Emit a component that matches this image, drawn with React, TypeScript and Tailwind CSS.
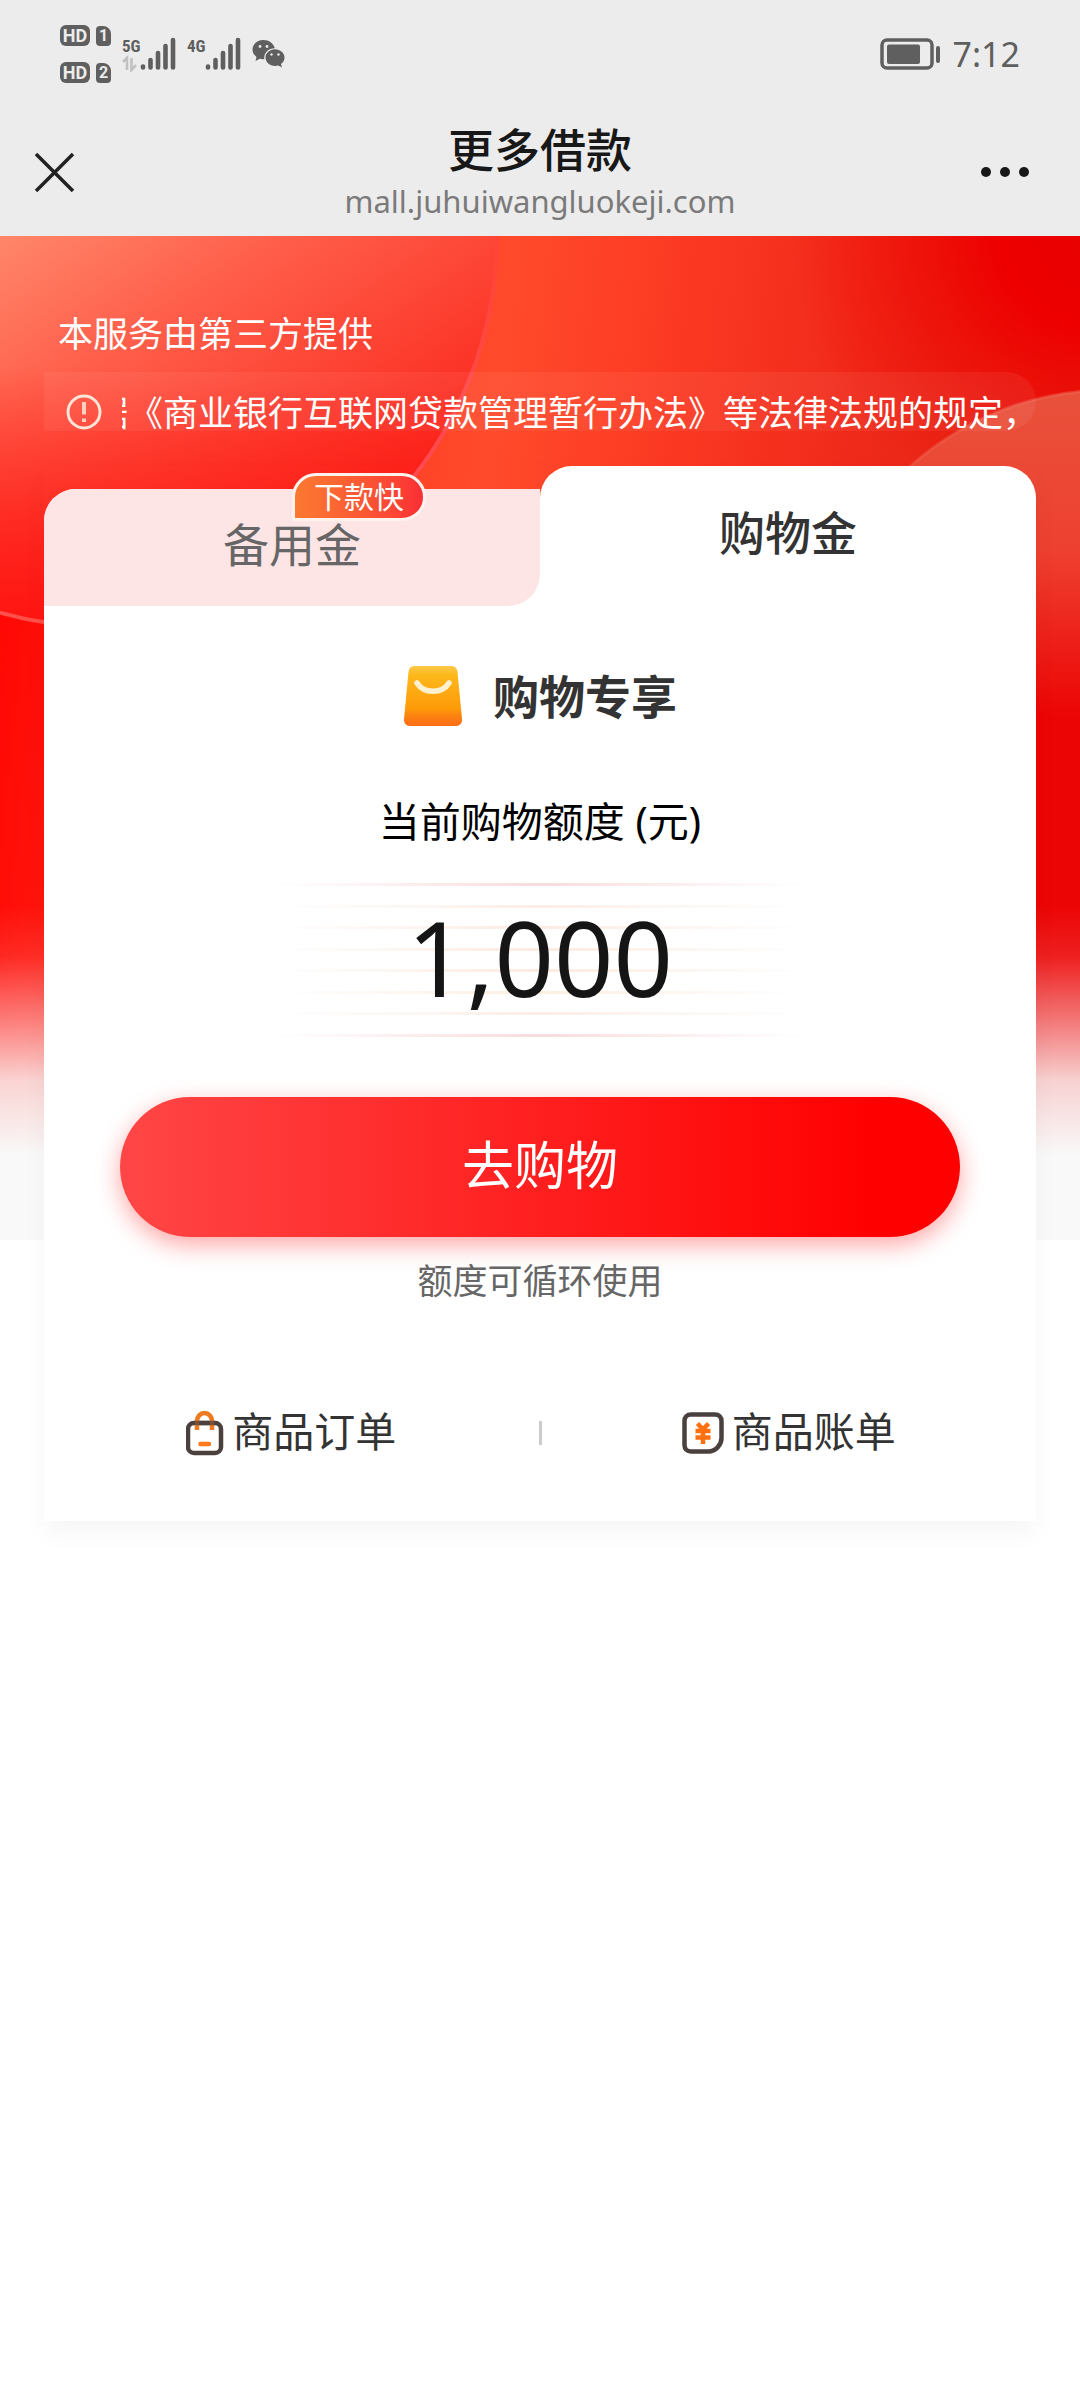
import React from "react";

const CREDIT_LINES = [
  "via-[#f8dcdf]",
  "via-[#fbeee6]",
  "via-[#fcebe2]",
  "via-[#fcebdf]",
  "via-[#fcebdf]",
  "via-[#fcefe0]",
  "via-[#fbeee6]",
  "via-[#f8dcdf]",
];

function SimBadge({ n }: { n: string }) {
  return (
    <div className="flex items-center gap-1.5 font-['Roboto',sans-serif] font-bold leading-none text-[#ececec]">
      <span className="flex h-[21px] w-[30px] items-center justify-center rounded-md bg-[#5f5f5f] text-[18px]">HD</span>
      <span className="flex h-[20px] w-[15px] items-center justify-center rounded-sm rounded-tr-lg bg-[#5f5f5f] text-[16px]">{n}</span>
    </div>
  );
}

function Signal({ label, arrows }: { label: string; arrows?: boolean }) {
  return (
    <svg width="54" height="36" viewBox="0 0 54 36" aria-label={label} role="img">
      <text x="0" y="16" fontFamily="Roboto Condensed, Roboto, sans-serif" fontSize="17" fontWeight="700" fill="#5f5f5f">
        {label}
      </text>
      {arrows && (
        <g stroke="#c0c0c0" strokeWidth="2.6" fill="none">
          <path d="M1 26 L5 22 V34" />
          <path d="M9.500 22 V34 L14 29" />
        </g>
      )}
      <g stroke="#5f5f5f" strokeWidth="4.600" strokeLinecap="round">
        <path d="M21 30.500V31.500M28.500 24V31.500M36 17V31.500M43.500 10V31.500M51 4V31.500" />
      </g>
    </svg>
  );
}

function WeChatIcon() {
  return (
    <svg width="34" height="28" viewBox="0 0 34 28" aria-hidden="true">
      <path fill="#5f5f5f" d="M11.500 0C5 0 .5 4.300.5 9.500c0 3 1.500 5.600 4 7.400L3.500 21l4.300-2.200c1.200.3 2.400.5 3.700.5h.8C11.500 13 16.500 8.200 22.800 8.300 21.600 3.500 17 0 11.500 0Z" />
      <path fill="#5f5f5f" d="M32.500 17.500c0-4.700-4.300-8.300-9.500-8.300s-9.500 3.700-9.500 8.300 4.200 8.400 9.500 8.400c1.200 0 2.300-.2 3.300-.5l3.700 2-1-3.300c2.200-1.600 3.500-3.900 3.500-6.600Z" />
      <g fill="#ececec">
        <circle cx="8" cy="6.500" r="1.400" />
        <circle cx="15" cy="6.500" r="1.400" />
        <circle cx="19.500" cy="14.500" r="1.200" />
        <circle cx="26.500" cy="14.500" r="1.200" />
      </g>
    </svg>
  );
}

function HeroArt() {
  return (
    <svg className="absolute inset-x-0 top-0 h-[1004px] w-full" viewBox="0 0 1080 1004" preserveAspectRatio="none" aria-hidden="true">
      <defs>
        <linearGradient id="base" x1="0" y1="0" x2="1080" y2="120" gradientUnits="userSpaceOnUse">
          <stop offset="0" stopColor="#ff0000" />
          <stop offset=".3" stopColor="#ff3a22" />
          <stop offset=".47" stopColor="#ff4a2b" />
          <stop offset=".6" stopColor="#fd3c24" />
          <stop offset=".8" stopColor="#f02a1a" />
          <stop offset="1" stopColor="#dc2818" />
        </linearGradient>
        <radialGradient id="corner" cx="1090" cy="0" r="300" gradientUnits="userSpaceOnUse">
          <stop offset="0" stopColor="#e80000" />
          <stop offset=".3" stopColor="#ee0000" />
          <stop offset="1" stopColor="#f20a00" stopOpacity="0" />
        </radialGradient>
        <linearGradient id="left" x1="0" y1="0" x2="250" y2="370" gradientUnits="userSpaceOnUse">
          <stop offset="0" stopColor="#ff866a" />
          <stop offset=".35" stopColor="#ff5f4b" />
          <stop offset=".8" stopColor="#fc3729" />
          <stop offset="1" stopColor="#fa251c" />
        </linearGradient>
        <linearGradient id="leftDeep" x1="0" y1="130" x2="0" y2="385" gradientUnits="userSpaceOnUse">
          <stop offset="0" stopColor="#ff1512" stopOpacity="0" />
          <stop offset="1" stopColor="#ff1512" />
        </linearGradient>
        <linearGradient id="right" x1="0" y1="150" x2="0" y2="480" gradientUnits="userSpaceOnUse">
          <stop offset="0" stopColor="#e8523c" />
          <stop offset=".5" stopColor="#ee4030" />
          <stop offset="1" stopColor="#ec0505" />
        </linearGradient>
        <linearGradient id="rightRim" x1="0" y1="150" x2="0" y2="400" gradientUnits="userSpaceOnUse">
          <stop offset="0" stopColor="#f0705c" stopOpacity=".45" />
          <stop offset="1" stopColor="#f0705c" stopOpacity="0" />
        </linearGradient>
        <linearGradient id="rim" x1="0" y1="0" x2="0" y2="390" gradientUnits="userSpaceOnUse">
          <stop offset="0" stopColor="#ff4436" />
          <stop offset=".6" stopColor="#ff4a50" />
          <stop offset="1" stopColor="#ff5048" />
        </linearGradient>
        <linearGradient id="fade" x1="0" y1="670" x2="0" y2="920" gradientUnits="userSpaceOnUse">
          <stop offset="0" stopColor="#f9e0e0" stopOpacity="0" />
          <stop offset=".2" stopColor="#f9e0e0" stopOpacity=".12" />
          <stop offset=".45" stopColor="#fae4e4" stopOpacity=".5" />
          <stop offset=".7" stopColor="#f9eeee" stopOpacity=".88" />
          <stop offset="1" stopColor="#f9f9f9" />
        </linearGradient>
      </defs>
      <rect width="1080" height="1004" fill="url(#base)" />
      <rect width="1080" height="420" fill="url(#corner)" />
      <circle cx="105" cy="-1" r="392" fill="url(#left)" />
      <circle cx="105" cy="-1" r="392" fill="url(#leftDeep)" stroke="url(#rim)" strokeWidth="4" />
      <rect y="480" x="540" width="540" height="524" fill="#ec0505" />
      <circle cx="1110" cy="454" r="300" fill="url(#right)" stroke="url(#rightRim)" strokeWidth="3" />
      <rect y="670" width="1080" height="334" fill="url(#fade)" />
    </svg>
  );
}

function BagIcon() {
  return (
    <svg width="60" height="64" viewBox="0 0 60 64" aria-hidden="true">
      <defs>
        <linearGradient id="bag" x1="0" y1="0" x2="0" y2="1">
          <stop offset="0" stopColor="#fdc94a" />
          <stop offset=".15" stopColor="#fdb81c" />
          <stop offset=".72" stopColor="#ff9a08" />
          <stop offset=".82" stopColor="#fd8410" />
          <stop offset="1" stopColor="#fb6c18" />
        </linearGradient>
      </defs>
      <path d="M12 2h36c4 0 6 2 6.500 6l4.500 47c.3 4-2 7-6 7H7c-4 0-6.300-3-6-7L5.500 8C6 4 8 2 12 2Z" fill="url(#bag)" />
      <path d="M14 19c7 11 25 11 32 0" fill="none" stroke="#fff1cf" strokeWidth="5.500" strokeLinecap="round" />
    </svg>
  );
}

function OrderIcon() {
  return (
    <svg width="38" height="46" viewBox="1 0 38 46" fill="none" aria-hidden="true">
      <rect x="3" y="13" width="33" height="30" rx="6" stroke="#4a403e" strokeWidth="4.500" />
      <path d="M12 20v-9a7.500 8 0 0 1 15 0v9" stroke="#ee7a22" strokeWidth="4.500" />
      <path d="M9 13h21" stroke="#4a403e" strokeWidth="4.500" strokeOpacity=".7" />
      <path d="M15.500 34h8.500" stroke="#ff7a1a" strokeWidth="4.500" strokeLinecap="round" />
    </svg>
  );
}

function BillIcon() {
  return (
    <svg width="42" height="42" viewBox="0 0 42 42" fill="none" aria-hidden="true">
      <path d="M9 2.500h24c4 0 6.500 2.500 6.500 6.500v17c0 7-6 13.500-13 13.500H9c-4 0-6.500-2.500-6.500-6.500V9c0-4 2.500-6.500 6.500-6.500Z" stroke="#4a403e" strokeWidth="4.500" />
      <path d="M15.500 11.500l5.500 6 5.500-6M13.500 19h15M13.500 25.500h15M21 17v15" stroke="#ff7010" strokeWidth="4.500" />
    </svg>
  );
}

export default function App() {
  return (
    <div className="min-h-screen bg-white font-['Noto_Sans','Noto_Sans_CJK_SC',sans-serif] text-[#333]">
      <header className="h-[236px] bg-[#ececec]">
        <div className="flex h-[108px] items-center justify-between px-[60px]">
          <div className="flex items-center gap-[11px]">
            <div className="flex flex-col gap-4">
              <SimBadge n="1" />
              <SimBadge n="2" />
            </div>
            <Signal label="5G" arrows />
            <Signal label="4G" />
            <WeChatIcon />
          </div>
          <div className="flex items-center gap-3">
            <svg width="62" height="34" viewBox="0 0 62 34" aria-hidden="true">
              <rect x="3" y="3" width="50" height="28" rx="5" fill="none" stroke="#5f5f5f" strokeWidth="3.500" />
              <rect x="8" y="7.500" width="33" height="19.500" rx="2" fill="#5f5f5f" />
              <rect x="57" y="9" width="4" height="17" rx="2" fill="#5f5f5f" />
            </svg>
            <time className="text-[34px] leading-none text-[#5f5f5f]">7:12</time>
          </div>
        </div>
        <div className="flex h-32 items-center justify-between px-8">
          <button aria-label="关闭" className="flex w-20 justify-start">
            <svg width="44" height="44" viewBox="0 0 44 44" aria-hidden="true">
              <path d="M4 4l37 37M41 4L4 41" stroke="#222" strokeWidth="3.500" />
            </svg>
          </button>
          <div className="flex flex-col items-center pt-1">
            <h1 className="text-[46px] font-medium leading-[54px] text-[#181818]">更多借款</h1>
            <p className="text-[31px] leading-[50px] text-[#7a7a7a]">mall.juhuiwangluokeji.com</p>
          </div>
          <button aria-label="更多" className="flex w-20 justify-start pl-3">
            <svg width="50" height="12" viewBox="0 0 50 12" aria-hidden="true" fill="#181818">
              <circle cx="6" cy="6" r="5" />
              <circle cx="25" cy="6" r="5" />
              <circle cx="44" cy="6" r="5" />
            </svg>
          </button>
        </div>
      </header>

      <main className="relative px-11 pb-16">
        <HeroArt />
        <div className="relative">
          <p className="px-3.5 pb-2.5 pt-[70px] text-[35px] leading-[56px] text-white">本服务由第三方提供</p>

          <div className="flex h-[59px] items-end overflow-hidden rounded-r-[30px] bg-white/6 pl-[22px] text-white">
            <svg className="shrink-0" width="36" height="37" viewBox="0 0 36 37" fill="none" aria-hidden="true">
              <circle cx="18" cy="18" r="16" stroke="#ffe4d8" strokeWidth="3" />
              <path d="M18 8v12.500M18 24.500v3.500" stroke="#ffd0bf" strokeWidth="4" />
            </svg>
            <div className="ml-5 mr-4 flex flex-1 overflow-hidden">
              <div className="flex w-1.5 shrink-0 justify-end overflow-hidden text-[35px] leading-[36px]">
                <span>据</span>
              </div>
              <p className="whitespace-nowrap text-[35px] leading-[36px]">《商业银行互联网贷款管理暂行办法》等法律法规的规定，</p>
            </div>
          </div>

          <section className="mt-[35px] shadow-[0_12px_24px_rgba(0,0,0,0.04)]">
            <div role="tablist" className="grid grid-cols-2 items-end">
              <div className="relative rounded-tl-[32px] bg-white">
                <button role="tab" aria-selected="false" className="h-[117px] w-full rounded-br-[32px] rounded-tl-[32px] bg-[#fee5e5] pb-1.5 text-[46px] text-[#666]">
                  备用金
                </button>
                <span className="absolute -top-4 left-1/2 flex h-[48px] w-[134px] items-center justify-center rounded-r-full rounded-tl-full border-3 border-[#fff1ec] bg-linear-to-r from-[#fb7a30] to-[#fb2a35] bg-origin-border text-[30px] leading-none text-white">
                  下款快
                </span>
              </div>
              <button role="tab" aria-selected="true" className="h-[140px] rounded-t-[32px] bg-white pb-2 text-[46px] font-medium text-[#333]">
                购物金
              </button>
            </div>

            <div className="flex flex-col items-center bg-white pt-[58px]">
              <div className="flex items-center gap-[30px]">
                <BagIcon />
                <h2 className="text-[46px] font-bold leading-[64px]">购物专享</h2>
              </div>
              <p className="mt-[65px] text-[41px] leading-[56px] text-black">当前购物额度 (元)</p>
              <div className="mt-[34px] grid h-[154px] w-[530px] max-w-full">
                <div className="col-start-1 row-start-1 flex flex-col justify-between">
                  {CREDIT_LINES.map((tone, i) => (
                    <div key={i} className={`h-[3px] bg-linear-to-r from-transparent to-transparent ${tone}`} />
                  ))}
                </div>
                <strong className="col-start-1 row-start-1 self-start text-center text-[104px] font-normal leading-[148px] text-[#151515]">1,000</strong>
              </div>
              <div className="w-full px-[76px] pt-[60px]">
                <button className="h-[140px] w-full rounded-full bg-linear-to-r/srgb from-[#ff4646] to-[#ff0000] to-90% pb-1 text-[52px] text-white shadow-[0_8px_24px_rgba(255,0,0,0.35)]">
                  去购物
                </button>
              </div>
              <p className="mt-[18px] text-[35px] leading-[52px] text-[#666]">额度可循环使用</p>
              <nav className="mt-[94px] grid w-full grid-cols-[1fr_auto_1fr] items-center pb-[56px] text-[41px] leading-[60px]">
                <a href="#orders" className="flex items-center justify-center gap-2">
                  <OrderIcon />
                  <span className="pb-1">商品订单</span>
                </a>
                <span className="h-6 w-[3px] bg-[#ccc]" />
                <a href="#bills" className="flex items-center justify-center gap-2">
                  <BillIcon />
                  <span className="pb-1">商品账单</span>
                </a>
              </nav>
            </div>
          </section>
        </div>
      </main>
    </div>
  );
}
